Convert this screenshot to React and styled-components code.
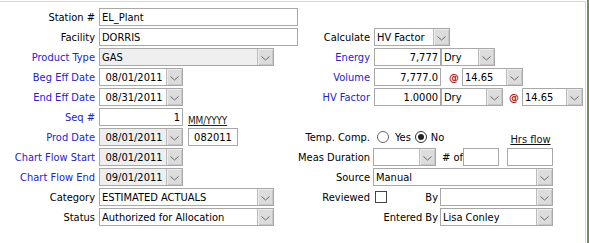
import React from "react";
import styled, { createGlobalStyle } from "styled-components";

const GlobalStyle = createGlobalStyle`
  html, body { margin: 0; padding: 0; background: #fff; }
  body {
    font-family: "DejaVu Sans Condensed", "Liberation Sans", Arial, sans-serif;
    font-size: 11px;
    color: #000;
  }
`;

const Page = styled.div`
  width: 589px;
  height: 243px;
  display: flex;
  background: #fff;
  overflow: hidden;
`;

const Panel = styled.div`
  box-sizing: border-box;
  width: 586px;
  margin-top: 1px;
  border-top: 1px solid #d6d6d6;
  border-right: 1px solid #d6d6d6;
`;

const GreenEdge = styled.div`
  width: 2px;
  margin-left: 1px;
  background: #6e9150;
`;

const Form = styled.div`
  display: grid;
  grid-template-columns: 99px 199px 75px 1fr;
  grid-auto-rows: 20px;
  align-items: center;
  padding-top: 5px;
`;

const Label = styled.div`
  text-align: right;
  padding-right: ${(p) => (p.$right ? 3 : 4)}px;
  white-space: nowrap;
  color: ${(p) => (p.$blue ? "#2424c8" : "#000")};
`;

const Cell = styled.div`
  display: flex;
  align-items: center;
  height: 20px;
  grid-column: ${(p) => p.$span || "auto"};
`;

const Empty = styled.div``;

const Field = styled.div`
  box-sizing: border-box;
  height: 18px;
  width: ${(p) => p.$w}px;
  flex: none;
  border: 1px solid #a8a8a8;
  background: ${(p) => (p.$disabled ? "#efefef" : "#fff")};
  display: flex;
  align-items: center;
  justify-content: ${(p) =>
    p.$align === "right" ? "flex-end" : p.$align === "center" ? "center" : "flex-start"};
  padding: 0 2px;
  white-space: nowrap;
  overflow: hidden;
  margin-left: ${(p) => p.$ml || 0}px;
`;

const SelectBox = styled.div`
  box-sizing: border-box;
  height: 18px;
  width: ${(p) => p.$w}px;
  flex: none;
  border: 1px solid #a8a8a8;
  background: ${(p) => (p.$disabled ? "#efefef" : "#fff")};
  display: flex;
  margin-left: ${(p) => p.$ml || 0}px;
`;

const SelectValue = styled.div`
  flex: 1;
  display: flex;
  align-items: center;
  justify-content: ${(p) => (p.$center ? "center" : "flex-start")};
  padding-left: 2px;
  white-space: nowrap;
  overflow: hidden;
`;

const ArrowBtn = styled.div`
  width: 16px;
  flex: none;
  box-sizing: border-box;
  border-left: 1px solid #bcbcbc;
  background: #dcdcdc;
  box-shadow: inset 1px 1px 0 #ececec, inset -1px -1px 0 #c8c8c8;
  display: flex;
  align-items: center;
  justify-content: center;
  padding-top: 2px;
`;

const At = styled.span`
  color: #b01818;
  font-weight: bold;
  margin-left: ${(p) => p.$ml}px;
  width: ${(p) => p.$w}px;
  flex: none;
`;

const Hint = styled.span`
  margin-left: 5px;
  font-size: 10px;
  color: #222;
  text-decoration: underline;
  align-self: flex-end;
  line-height: 12px;
  letter-spacing: -0.2px;
`;

const HrsFlow = styled.span`
  margin-left: auto;
  margin-right: 32px;
  width: 45px;
  text-align: center;
  text-decoration: underline;
  align-self: flex-end;
  line-height: 14px;
  color: #111;
`;

const Radio = styled.span`
  box-sizing: border-box;
  width: 12px;
  height: 12px;
  flex: none;
  border-radius: 50%;
  border: 1px solid ${(p) => (p.$checked ? "#333" : "#666")};
  background: #fff;
  display: flex;
  align-items: center;
  justify-content: center;
  margin-left: ${(p) => p.$ml}px;
  &::after {
    content: "";
    width: 6px;
    height: 6px;
    border-radius: 50%;
    background: ${(p) => (p.$checked ? "#222" : "transparent")};
  }
`;

const RadioText = styled.span`
  margin-left: ${(p) => p.$ml}px;
`;

const Check = styled.span`
  box-sizing: border-box;
  width: 12px;
  height: 12px;
  flex: none;
  border: 1px solid #444;
  background: #fff;
  margin-left: 2px;
`;

const InlineLabel = styled.span`
  box-sizing: border-box;
  width: ${(p) => p.$w}px;
  flex: none;
  text-align: ${(p) => p.$align || "right"};
  padding-right: 2px;
  padding-left: ${(p) => p.$pl || 0}px;
  white-space: nowrap;
`;

const Chevron = () => (
  <svg width="9" height="5" viewBox="0 0 9 5">
    <polyline points="0.5,0.5 4.5,4 8.5,0.5" fill="none" stroke="#6a6a6a" strokeWidth="1" />
  </svg>
);

const Select = ({ w, value, disabled, center, ml }) => (
  <SelectBox $w={w} $disabled={disabled} $ml={ml}>
    <SelectValue $center={center}>{value}</SelectValue>
    <ArrowBtn>
      <Chevron />
    </ArrowBtn>
  </SelectBox>
);

export default function App() {
  return (
    <>
      <GlobalStyle />
      <Page>
        <Panel>
          <Form>
            <Label>Station #</Label>
            <Cell><Field $w={199}>EL_Plant</Field></Cell>
            <Empty />
            <Empty />

            <Label>Facility</Label>
            <Cell><Field $w={199}>DORRIS</Field></Cell>
            <Label $right>Calculate</Label>
            <Cell><Select w={76} value="HV Factor" ml={1} /></Cell>

            <Label $blue>Product Type</Label>
            <Cell><Select w={175} value="GAS" disabled /></Cell>
            <Label $right $blue>Energy</Label>
            <Cell>
              <Field $w={67} $align="right" $ml={1}>7,777</Field>
              <Select w={54} value="Dry" />
            </Cell>

            <Label $blue>Beg Eff Date</Label>
            <Cell><Select w={84} value="08/01/2011" center /></Cell>
            <Label $right $blue>Volume</Label>
            <Cell>
              <Field $w={67} $align="right" $ml={1}>7,777.0</Field>
              <At $ml={8} $w={13}>@</At>
              <Select w={61} value="14.65" />
            </Cell>

            <Label $blue>End Eff Date</Label>
            <Cell><Select w={84} value="08/31/2011" center /></Cell>
            <Label $right $blue>HV Factor</Label>
            <Cell>
              <Field $w={67} $align="right" $ml={1}>1.0000</Field>
              <Select w={62} value="Dry" />
              <At $ml={6} $w={13}>@</At>
              <Select w={61} value="14.65" />
            </Cell>

            <Label $blue>Seq #</Label>
            <Cell>
              <Field $w={84} $align="right">1</Field>
              <Hint>MM/YYYY</Hint>
            </Cell>
            <Empty />
            <Empty />

            <Label $blue>Prod Date</Label>
            <Cell>
              <Select w={84} value="08/01/2011" disabled center />
              <Field $w={50} $align="center" $ml={5}>082011</Field>
            </Cell>
            <Label $right>Temp. Comp.</Label>
            <Cell>
              <Radio $ml={4} />
              <RadioText $ml={6}>Yes</RadioText>
              <Radio $ml={4} $checked />
              <RadioText $ml={4}>No</RadioText>
              <HrsFlow>Hrs flow</HrsFlow>
            </Cell>

            <Label $blue>Chart Flow Start</Label>
            <Cell><Select w={84} value="08/01/2011" disabled center /></Cell>
            <Label $right>Meas Duration</Label>
            <Cell>
              <Select w={63} value="" />
              <InlineLabel $w={27} $align="left" $pl={6}># of</InlineLabel>
              <Field $w={36} />
              <Field $w={46} $ml={8} />
            </Cell>

            <Label $blue>Chart Flow End</Label>
            <Cell><Select w={84} value="09/01/2011" disabled center /></Cell>
            <Label $right>Source</Label>
            <Cell><Select w={180} value="Manual" /></Cell>

            <Label>Category</Label>
            <Cell><Select w={175} value="ESTIMATED ACTUALS" /></Cell>
            <Label $right>Reviewed</Label>
            <Cell>
              <Check />
              <InlineLabel $w={53}>By</InlineLabel>
              <Select w={113} value="" />
            </Cell>

            <Label>Status</Label>
            <Cell><Select w={175} value="Authorized for Allocation" /></Cell>
            <Empty />
            <Cell>
              <InlineLabel $w={67}>Entered By</InlineLabel>
              <Select w={113} value="Lisa Conley" />
            </Cell>
          </Form>
        </Panel>
        <GreenEdge />
      </Page>
    </>
  );
}
